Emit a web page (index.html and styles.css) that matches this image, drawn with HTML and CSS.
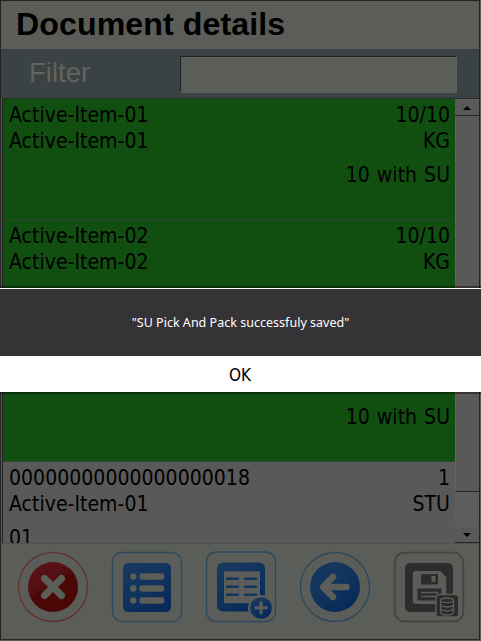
FILE: index.html
```
<!DOCTYPE html>
<html lang="en">
<head>
<meta charset="utf-8">
<title>Document details</title>
<link rel="stylesheet" href="styles.css">
</head>
<body>
<main class="app">
  <header class="title"><h1>Document details</h1></header>
  <div class="filter"><label for="f">Filter</label><input id="f" type="text"></div>
  <section class="list">
    <div class="rows">
      <article class="row"><p><span>Active-Item-01</span><span>10/10</span></p><p><span>Active-Item-01</span><span>KG</span></p><p class="extra"><span></span><span>10 with SU</span></p></article>
      <article class="row"><p><span>Active-Item-02</span><span>10/10</span></p><p><span>Active-Item-02</span><span>KG</span></p><p class="extra"></p></article>
      <article class="row"><p></p><p></p><p class="extra"><span></span><span>10 with SU</span></p></article>
      <article class="row plain"><p><span>00000000000000000018</span><span>1</span></p><p><span>Active-Item-01</span><span>STU</span></p><p class="extra"><span>01</span></p></article>
    </div>
    <div class="scroll">
      <div class="step"><svg width="8" height="4" viewBox="0 0 8 4"><path d="M0 4 4 0 8 4z"/></svg></div>
      <div class="thumb"></div>
      <div class="track"></div>
      <div class="step"><svg width="8" height="4" viewBox="0 0 8 4"><path d="M0 0h8L4 4z"/></svg></div>
    </div>
  </section>
  <nav class="tools">
    <svg viewBox="0 0 72 72">
      <defs>
        <linearGradient id="red" x1="0" y1="0" x2="0.6" y2="1"><stop offset="0" stop-color="#5c141c"/><stop offset=".5" stop-color="#520f12"/><stop offset=".55" stop-color="#4c0806"/><stop offset="1" stop-color="#490706"/></linearGradient>
        <linearGradient id="blue" x1="0" y1="0" x2="0.6" y2="1"><stop offset="0" stop-color="#193a5f"/><stop offset=".5" stop-color="#11345f"/><stop offset="1" stop-color="#072a58"/></linearGradient>
      </defs>
      <circle class="ring-red" cx="36" cy="36" r="34.5"/><circle cx="36" cy="36" r="25" fill="url(#red)"/>
      <path class="cut" stroke-width="7" d="M27.500 27.500l17 17m0-17l-17 17"/>
    </svg>
    <svg viewBox="0 0 72 72">
      <rect class="ring" x="1.500" y="1.500" width="69" height="69" rx="9.500"/><rect x="12" y="12" width="48" height="49" rx="5" fill="url(#blue)"/>
      <path class="cut" stroke-width="6.400" d="M22.300 25.500h.01M22.300 37.500h.01M22.300 49.500h.01M31.500 25.500h18.700M31.500 37.500h18.700M31.500 49.500h18.700"/>
    </svg>
    <svg viewBox="0 0 72 72">
      <rect class="ring" x="1.500" y="1" width="69" height="69.500" rx="9.500"/><rect x="12" y="11.500" width="48" height="49" rx="6" fill="url(#blue)"/>
      <path class="face" d="M19 20.300h36v32H19z"/>
      <path class="lines" d="M21 27.700h13m5 0h13M21 35.700h13m5 0h13M21 43.700h13m5 0h13"/>
      <circle class="face" cx="56" cy="57" r="13"/><circle cx="56" cy="57" r="10.800" fill="url(#blue)"/>
      <path class="cut" stroke-width="3" d="M56 51.500v10.600M50.700 56.800h10.600"/>
    </svg>
    <svg viewBox="0 0 72 72">
      <circle class="ring" cx="36" cy="36" r="34.500"/><circle cx="36" cy="36" r="25" fill="url(#blue)"/>
      <path class="cut" stroke-width="6.600" d="M34 26 24 36l10 10M25 36h22.500"/>
    </svg>
    <svg viewBox="0 0 72 72">
      <rect class="ring-gray" x="1.700" y="1.700" width="68.600" height="68.600" rx="9.500"/><rect class="dark" x="12" y="12" width="48" height="49" rx="5"/>
      <path class="face" d="M22.500 20h24.700l6 6v27H22.500q-2.700 0-2.700-2.700V22.700q0-2.700 2.700-2.700z"/>
      <path class="dark" d="M28 23h17v10.500H28zM24.500 37.500h24v12h-24z"/>
      <path class="face" d="M38.500 25h4v6h-4z"/><path class="stripe" d="M28 41.500h17M28 45.500h17"/>
      <rect class="disk" x="43" y="43.500" width="22.700" height="22.500" rx="3"/>
      <g class="db"><path d="M47.500 49.500v11.500c0 4 13 4 13 0V49.500"/><ellipse cx="54" cy="49.300" rx="6.500" ry="2.300"/><path d="M47.500 53.300c0 3.500 13 3.500 13 0M47.500 57.300c0 3.500 13 3.500 13 0"/></g>
    </svg>
  </nav>
</main>
<div class="dialog" role="alertdialog">
  <div class="message">"SU Pick And Pack successfuly saved"</div>
  <button class="ok">OK</button>
</div>
</body>
</html>
```
FILE: styles.css
```
* { box-sizing: border-box; margin: 0; padding: 0; }
body { width: 481px; height: 641px; overflow: hidden; background: #595959; }
.app { width: 480px; height: 640px; border: 1px solid #222323; border-bottom-color: #262626; display: flex; flex-direction: column; background: #5b5d59; }
.title { height: 48px; padding-left: 15px; background: #5b5d59; }
h1 { font: bold 32.2px/46px "Liberation Sans", sans-serif; color: #000; white-space: nowrap; letter-spacing: .05px; }
.filter { height: 49px; background: #3a4243; display: flex; align-items: flex-start; padding: 7px 0 0 28px; }
.filter label { width: 151px; font: 27.500px/34px "Liberation Sans", sans-serif; color: #62645f; }
.filter input { width: 277px; height: 37px; border: 1px solid #60625e; border-top-color: #202322; border-left-color: #202322; background: #5b5d59; }
.list { height: 445px; border-top: 1px solid #292b2b; margin-left: 1px; border-left: 1px solid #222; display: flex; overflow: hidden; }
.rows { flex: 1; overflow: hidden; background: #595959; }
.row { height: 121px; padding: 3px 5px 0 6px; background: #104f10; border-bottom: 1px solid #304530; color: #000; }
.row.plain { background: #595959; border: 0; }
.row p { height: 26px; display: flex; justify-content: space-between; font: 21px/26px "DejaVu Sans Condensed", "DejaVu Sans", sans-serif; font-stretch: condensed; letter-spacing: .03px; white-space: pre; }
.row p.extra { margin-top: 8px; word-spacing: 1px; }
.scroll { width: 24px; display: flex; flex-direction: column; background: #606160; }
.step { height: 17px; border-bottom: 1px solid #242424; border-top: 1px solid #626262; background: #595959; display: flex; align-items: center; justify-content: center; flex: none; }
.thumb { height: 376px; background: #595959; border-left: 1px solid #646464; border-bottom: 1px solid #242424; }
.track { flex: 1; background: #5d5e5d; }
.tools { flex: 1; border-top: 1px solid #505151; display: flex; gap: 22px; padding: 7px 0 0 16px; }
.tools svg { width: 72px; height: 72px; flex: none; }
.ring, .ring-red, .ring-gray { fill: none; stroke: #2d485d; stroke-width: 1.4; }
.ring-red { stroke: #613335; }
.ring-gray { stroke: #434442; stroke-width: 1.8; }
.cut { fill: none; stroke: #5b5d59; stroke-linecap: round; stroke-linejoin: round; }
.face { fill: #5b5d59; }
.lines { stroke: #13365c; stroke-width: 2.5; fill: none; }
.dark { fill: #2b2c2b; }
.stripe { stroke: #5b5d59; stroke-width: 1.5; fill: none; }
.disk { fill: #292a29; stroke: #5b5d59; stroke-width: 1.5; }
.db { fill: none; stroke: #5b5d59; stroke-width: 1.4; }
.dialog { position: absolute; left: 0; top: 286px; width: 481px; height: 108px; border-top: 2px solid rgba(0,0,0,.4); border-bottom: 2px solid rgba(0,0,0,.4); }
.message { height: 68px; border-top: 1px solid #fff; background: #363337; color: #fff; text-align: center; font: 12.500px/68px "Noto Sans", sans-serif; letter-spacing: .02px; }
.ok { display: block; width: 100%; height: 36px; border: 0; background: #fff; color: #000; padding: 1px 1px 0 0; font: 17px/36px "DejaVu Sans Condensed", "DejaVu Sans", sans-serif; font-stretch: condensed; }
```
